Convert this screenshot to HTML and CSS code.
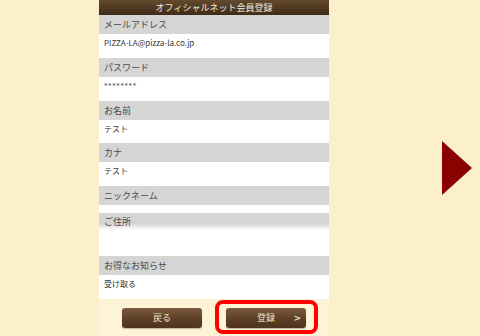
FILE: index.html
```html
<!DOCTYPE html>
<html lang="ja">
<head>
<meta charset="utf-8">
<link rel="stylesheet" href="styles.css">
</head>
<body>
<div class="page">
  <div class="panel">
    <div class="header">オフィシャルネット会員登録</div>
    <div class="label">メールアドレス</div>
    <div class="value">PIZZA-LA@pizza-la.co.jp</div>
    <div class="label">パスワード</div>
    <div class="value stars">********</div>
    <div class="label">お名前</div>
    <div class="value short">テスト</div>
    <div class="label">カナ</div>
    <div class="value">テスト</div>
    <div class="label">ニックネーム</div>
    <div class="value tiny"></div>
    <div class="label fade">ご住所</div>
    <div class="value tall"></div>
    <div class="label">お得なお知らせ</div>
    <div class="value">受け取る</div>
    <div class="actions">
      <div class="btn">戻る</div>
      <div class="btn-wrap">
        <div class="btn">登録<span class="chev">&gt;</span></div>
        <div class="highlight"></div>
      </div>
    </div>
  </div>
  <div class="arrow"></div>
</div>
</body>
</html>
```
FILE: styles.css
```css
html, body {
  margin: 0;
  padding: 0;
}
body {
  background: #fcefcb;
  font-family: "Noto Sans CJK JP", "Noto Sans", sans-serif;
  width: 480px;
  height: 336px;
  overflow: hidden;
}
.page {
  display: flex;
  align-items: center;
  height: 336px;
}
.panel {
  margin-left: 99px;
  width: 230px;
  height: 336px;
  align-self: flex-start;
  display: flex;
  flex-direction: column;
}
.header {
  height: 15px;
  line-height: 15px;
  background: linear-gradient(#634a2d, #3f2b18);
  color: #f2ebe0;
  font-size: 9px;
  text-align: center;
}
.label {
  height: 19px;
  line-height: 19px;
  background: #d5d5d5;
  color: #4a4a4a;
  font-size: 9px;
  padding-left: 5px;
}
.label.fade {
  height: 17px;
  line-height: 18px;
  background: linear-gradient(#d5d5d5 0%, #d5d5d5 62%, #ffffff 100%);
}
.value {
  height: 24px;
  background: #fff;
  color: #333;
  font-size: 8px;
  line-height: 18px;
  padding-left: 5px;
}
.value.stars {
  font-family: "DejaVu Sans", sans-serif;
  font-size: 7px;
  letter-spacing: 0.6px;
  color: #444;
}
.value.short { height: 23px; }
.value.tiny { height: 8px; }
.value.tall { height: 26px; }
.actions {
  flex: 1;
  background: #fdf3d6;
  display: flex;
  justify-content: center;
  gap: 24px;
  padding-top: 9px;
}
.btn-wrap {
  position: relative;
}
.btn {
  position: relative;
  width: 80px;
  height: 20px;
  line-height: 20px;
  border-radius: 3px;
  background: linear-gradient(#7a5b3f, #5c3f25 55%, #4f351e);
  box-shadow: 0 1px 1px rgba(0,0,0,0.25);
  color: #eee4d6;
  font-size: 9px;
  text-align: center;
}
.chev {
  position: absolute;
  right: 5px;
  top: 0;
  font-size: 9px;
  font-family: "DejaVu Sans", sans-serif;
  font-weight: bold;
}
.highlight {
  position: absolute;
  left: -11px;
  top: -8px;
  width: 95px;
  height: 26px;
  border: 4px solid #ff0000;
  border-radius: 8px;
}
.arrow {
  margin-left: 113px;
  width: 0;
  height: 0;
  border-left: 30px solid #8b0000;
  border-top: 27px solid transparent;
  border-bottom: 27px solid transparent;
}
```
